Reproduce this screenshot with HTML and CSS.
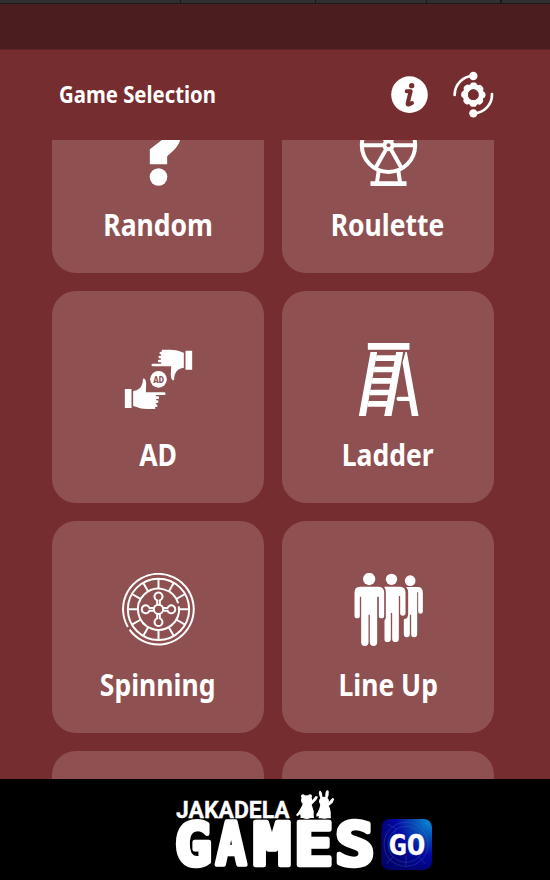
FILE: index.html
```html
<!DOCTYPE html>
<html lang="en">

<head>
	<meta charset="UTF-8">
	<title>Game Selection</title>
	<link rel="stylesheet" href="styles.css">
</head>

<body>
	<div class="tabs">
		<i class="tab1"></i><i class="tab2"></i><i class="tab3"></i><i class="tab4"></i><i></i>
	</div>
	<div class="status-bar"></div>

	<header class="header">
		<h1 class="title">Game Selection</h1>
		<svg class="header-icons" viewBox="0 -4 330 150">
			<!-- info -->
			<circle cx="67.500" cy="70" r="55" fill="#fff"/>
			<circle cx="74" cy="43" r="8" fill="#762d2f"/>
			<path d="M59 60h12l-9 36q-1 5 4 3l9-4" fill="none" stroke="#762d2f" stroke-width="12" stroke-linejoin="round" stroke-linecap="round"/>
			<!-- settings -->
			<circle cx="259" cy="70" r="24" fill="none" stroke="#fff" stroke-width="16"/>
			<circle cx="259" cy="70" r="29" fill="none" stroke="#fff" stroke-width="15" stroke-linecap="round" stroke-dasharray="5 17.776" stroke-dashoffset="2.500"/>
			<circle cx="259" cy="70" r="16" fill="#762d2f"/>
			<path d="M203 71A56 56 0 0 1 259 14M315 68A56 56 0 0 1 259 126" fill="none" stroke="#fff" stroke-width="8" stroke-linecap="round"/>
			<circle cx="259" cy="14" r="12.500" fill="#fff"/>
			<circle cx="259" cy="126" r="12.500" fill="#fff"/>
		</svg>
	</header>

	<main class="list">
		<div class="grid">
			<div class="card">
				<svg class="icon" viewBox="244.500 -51 219 219">
					<path d="M328 103V58l45-35q10-8 10-20 0-18-27-18-29 0-29 24h-52q0-60 83-60 65 0 65 49 0 24-4 32-6 20-24 35l-15 14v24z"/>
					<circle cx="354" cy="141" r="26.500"/>
				</svg>
				<p class="name">Random</p>
			</div>
			<div class="card">
				<svg class="icon line" viewBox="214.500 -51 219 219">
					<g stroke-width="12">
						<circle cx="324" cy="46" r="80"/>
						<path d="M244 46h160M321 50l-36 64M327 50l36 64M321 42l-36-64M327 42l36-64M295 120l-6 40M353 120l6 40"/>
						<path d="M270 161h108" stroke-width="14"/>
					</g>
					<circle cx="324" cy="46" r="18" class="fill"/>
					<circle cx="324" cy="46" r="6" class="hole"/>
				</svg>
				<p class="name">Roulette</p>
			</div>
			<div class="card">
				<svg class="icon" viewBox="64.500 39 219 219">
					<path id="hand" d="M98 183q19-3 25-16 5-11 4-17-1-6 5-4 5 3 5 14l-1 27h55q4 0 4 4t-4 4h-25v4h6q4 0 4 4t-4 4h-5v4h3q4 0 4 4t-4 4h-4v4h1q4 0 4 4t-4 4h-3v3q3 3-2 3h-24q-18 0-27-5l-13-4zM73 177h20v57H73z"/>
					<use href="#hand" transform="rotate(180 174 148)"/>
					<circle cx="174" cy="148" r="25"/>
					<text x="158" y="157.500" textLength="32" lengthAdjust="spacingAndGlyphs" class="ad-text">AD</text>
				</svg>
				<p class="name">AD</p>
			</div>
			<div class="card">
				<svg class="icon" viewBox="64.500 39 219 219">
					<path d="M112 39h125v20H112zM120 66h20l-34 192H85zM197 66h21l-35 192h-22zM225 66h4l35 192h-20l-28-160z"/>
					<path d="M138 76h58v17h-61zM132 110h58l-3 17h-58zM126 144h58l-3 17h-58zM120 179h58l-3 17h-58zM114 213h58l-3 17h-58z"/>
					<rect x="198" y="200" width="52" height="13" rx="6.500"/>
				</svg>
				<p class="name">Ladder</p>
			</div>
			<div class="card">
				<svg class="icon line" viewBox="94.500 39 219 219">
					<g stroke-width="6">
						<path d="M112 200.700A106 106 0 1 1 117.200 208.800"/>
						<circle cx="204" cy="148" r="92"/>
						<path d="M263 130A61.700 61.700 0 1 0 265 139"/>
						<g id="spokes">
							<path id="spoke" d="M204 56v31M204 209v31"/>
							<use href="#spoke" transform="rotate(30 204 148)"/>
							<use href="#spoke" transform="rotate(60 204 148)"/>
						</g>
						<use href="#spokes" transform="rotate(90 204 148)"/>
						<circle cx="204" cy="148" r="14"/>
						<g id="arms">
							<path id="arm" d="M200 134v-13a12 12 0 1 1 8 0v13"/>
							<use href="#arm" transform="rotate(180 204 148)"/>
						</g>
						<use href="#arms" transform="rotate(90 204 148)"/>
					</g>
				</svg>
				<p class="name">Spinning</p>
			</div>
			<div class="card">
				<svg class="icon" viewBox="64.500 39 219 219">
					<circle cx="116" cy="57" r="18.500"/>
					<path d="M88 80h56q17 0 17 19v68q0 8-8 8t-8-8v-57h-5v137q0 11-11 11t-11-11v-83h-4v83q0 11-11 11t-11-11V110h-4v57q0 8-8 8t-8-8V99q0-19 16-19z"/>
					<circle cx="183" cy="58" r="17"/>
					<path d="M161 80h48q16 0 16 18v61q0 8-8 8t-8-8v-51h-4v128q0 10-10 10t-10-10v-77h-4v77q0 10-10 10t-9-10v-55q4-3 4-9V98q0-10-5-18z"/>
					<circle cx="239" cy="62" r="16"/>
					<path d="M227 81h35q15 0 15 17v55q0 8-7 8t-7-8V97h-3v126q0 9-9 9t-9-9v-59h-4v59q0 9-9 9t-9-9v-45q13-2 13-16V98q0-10-6-17z"/>
				</svg>
				<p class="name">Line Up</p>
			</div>
			<div class="card"></div>
			<div class="card"></div>
		</div>
	</main>

	<footer class="banner">
		<svg class="logo" viewBox="0 12 870 303">
			<defs>
				<radialGradient id="blue" cx="1" cy="0" r="1.100">
					<stop offset="0" stop-color="#0796dc"/>
					<stop offset=".3" stop-color="#0654b8"/>
					<stop offset=".65" stop-color="#0208a0"/>
					<stop offset="1" stop-color="#03036e"/>
				</radialGradient>
			</defs>
			<text x="48" y="128" font-size="73" textLength="341" lengthAdjust="spacingAndGlyphs" class="brand small">JAKADELA</text>
			<g font-size="178" class="brand big">
				<text x="44" y="269" textLength="111" lengthAdjust="spacingAndGlyphs">G</text>
				<text x="167" y="269" textLength="92" lengthAdjust="spacingAndGlyphs">A</text>
				<text x="279" y="269" textLength="114" lengthAdjust="spacingAndGlyphs">M</text>
				<text x="402" y="269" textLength="118" lengthAdjust="spacingAndGlyphs">E</text>
				<text x="525" y="269" textLength="119" lengthAdjust="spacingAndGlyphs">S</text>
			</g>
			<!-- bear and rabbit -->
			<g fill="#fff">
				<circle cx="429" cy="64" r="6"/>
				<circle cx="450" cy="64" r="6"/>
				<ellipse cx="440" cy="76" rx="17" ry="15"/>
				<path d="M428 86q-4 14-20 34l4 4 12-9-3 14h41l-3-28-4-12 14-14 5-10-7-2-14 17-8 4z"/>
				<ellipse cx="440" cy="112" rx="21" ry="20"/>
				<ellipse cx="482" cy="59" rx="4.500" ry="12" transform="rotate(-12 482 59)"/>
				<ellipse cx="501" cy="58" rx="5" ry="12" transform="rotate(8 501 58)"/>
				<ellipse cx="492" cy="79" rx="15" ry="14"/>
				<path d="M481 88l-4 18-8 12v7l8-2-2 7h38l-3-30-4-7 12-10 5-12-6-2-14 16z"/>
				<ellipse cx="493" cy="113" rx="19" ry="18"/>
			</g>
			<!-- GO badge -->
			<rect x="664" y="132" width="152" height="153" rx="25" fill="url(#blue)"/>
			<g fill="none" stroke="#4565d0" stroke-width="3" opacity=".35">
				<circle cx="738" cy="208" r="66"/>
				<circle cx="738" cy="208" r="54"/>
				<path d="M738 242v32M700 244l-20 22M775 244l20 22M684 148l28 16-12 8 16 14"/>
			</g>
			<g font-size="86" class="brand go">
				<text x="685" y="241" textLength="56" lengthAdjust="spacingAndGlyphs">G</text>
				<text x="740" y="241" textLength="56" lengthAdjust="spacingAndGlyphs">O</text>
			</g>
		</svg>
	</footer>
</body>

</html>
```
FILE: styles.css
```css
* {
	margin: 0;
	padding: 0;
	box-sizing: border-box;
}

body {
	width: 550px;
	height: 880px;
	display: flex;
	flex-direction: column;
	overflow: hidden;
	background: #762d2f;
	color: #fff;
	font-family: "Noto Sans", sans-serif;
}

.tabs {
	height: 4px;
	display: flex;
	background: #303030;
	border-bottom: 1px solid #1e1a1a;
}

.tabs i {
	border-right: 1px solid #191919;
}

.tab1 {
	width: 181px;
}

.tab2 {
	width: 135px;
}

.tab3 {
	width: 111px;
}

.tab4 {
	width: 74px;
}

.status-bar {
	height: 46px;
	background: #4b1d1e;
	border-bottom: 1px solid #622426;
}

.header {
	height: 90px;
	padding: 0 53.5px 0 58.5px;
	display: flex;
	justify-content: space-between;
	align-items: center;
}

.title {
	margin-bottom: 2px;
	font-size: 23.5px;
	line-height: 30px;
	font-weight: 700;
	white-space: nowrap;
	transform: scaleX(.865);
	transform-origin: left;
}

.header-icons {
	width: 110px;
	height: 50px;
}

.list {
	height: 639px;
	padding: 0 52px;
	overflow: hidden;
}

/*the list is scrolled, first and last rows are cut*/
.grid {
	margin-top: -79.5px;
	display: grid;
	grid-template-columns: 212px 212px;
	grid-auto-rows: 212px;
	gap: 18.2px 18px;
}

.card {
	padding-top: 52px;
	display: flex;
	flex-direction: column;
	align-items: center;
	background: #8f5051;
	border-radius: 24px;
}

.icon {
	width: 73px;
	height: 73px;
	flex: none;
	fill: #fff;
}

.line {
	fill: none;
	stroke: #fff;
	stroke-linecap: butt;
}

.fill {
	fill: #fff;
	stroke: none;
}

.hole {
	fill: #8f5051;
	stroke: none;
}

.ad-text {
	font: 900 26px Roboto, sans-serif;
	fill: #8f5051;
}

.name {
	margin-top: 17px;
	font-size: 31px;
	line-height: 42px;
	font-weight: 700;
	white-space: nowrap;
	transform: scaleX(.855);
}

.banner {
	height: 101px;
	padding-left: 160px;
	background: #000;
}

.logo {
	display: block;
	width: 290px;
	height: 101px;
}

.brand {
	font-family: "DejaVu Sans Mono", monospace;
	font-weight: 700;
	fill: #fff;
	stroke: #fff;
	stroke-linejoin: round;
}

.small {
	font-family: Roboto, sans-serif;
	stroke-width: 1px;
}

.big {
	stroke-width: 14px;
}

.go {
	stroke-width: 1px;
}
```
